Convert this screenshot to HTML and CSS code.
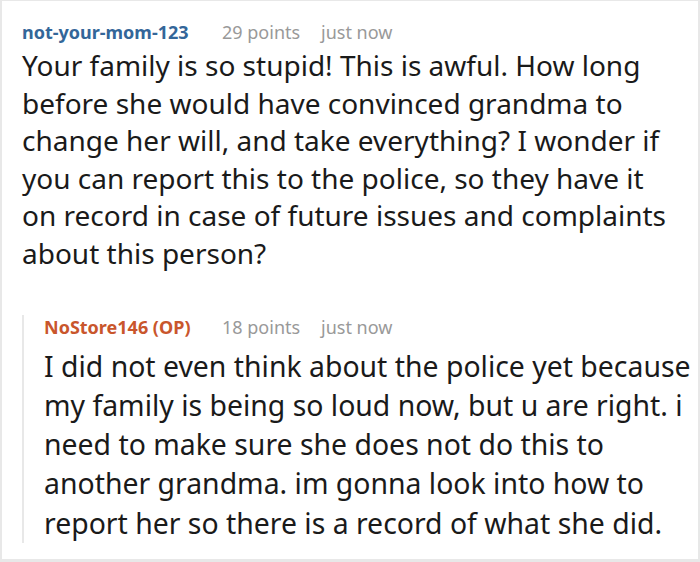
FILE: index.html
```html
<!DOCTYPE html>
<html>
<head>
<meta charset="utf-8">
<link rel="stylesheet" href="styles.css">
</head>
<body>
<div class="frame">
  <div class="comment">
    <div class="meta">
      <span class="author">not-your-mom-123</span>
      <span class="points">29 points</span>
      <span class="time">just now</span>
    </div>
    <p class="body">Your family is so stupid! This is awful. How long before she would have convinced grandma to change her will, and take everything? I wonder if you can report this to the police, so they have it on record in case of future issues and complaints about this person?</p>
    <div class="reply">
      <div class="meta">
        <span class="author op">NoStore146 (OP)</span>
        <span class="points">18 points</span>
        <span class="time">just now</span>
      </div>
      <p class="body reply-body">I did not even think about the police yet because my family is being so loud now, but u are right. i need to make sure she does not do this to another grandma. im gonna look into how to report her so there is a record of what she did.</p>
    </div>
  </div>
</div>
</body>
</html>
```
FILE: styles.css
```css
html, body {
  margin: 0;
  padding: 0;
  background: #fff;
}
.frame {
  box-sizing: border-box;
  width: 700px;
  height: 562px;
  border-top: 1px solid #e8e8e8;
  border-left: 2px solid #e8e8e8;
  border-right: 2px solid #e8e8e8;
  border-bottom: 3px solid #e8e8e8;
  font-family: "Noto Sans", "Open Sans", sans-serif;
  color: #1a1a1a;
  overflow: hidden;
}
.comment {
  padding: 19px 0 0 20px;
}
.meta {
  display: flex;
  align-items: baseline;
  font-size: 18px;
  line-height: 24px;
}
.author {
  font-weight: bold;
  color: #336699;
  width: 200px;
}
.author.op {
  color: #c9562c;
  width: 178px;
}
.points {
  color: #999;
  width: 99px;
}
.time {
  color: #999;
}
.body {
  margin: 3px 0 0;
  font-size: 28px;
  line-height: 37.6px;
  padding-right: 16px;
}
.reply {
  margin-top: 42px;
  border-left: 2px solid #e8e8e8;
  padding-left: 20px;
}
.reply-body {
  margin-top: 8px;
  padding-right: 0;
  font-size: 28.4px;
  line-height: 39.3px;
  margin-right: -4px;
}
```
